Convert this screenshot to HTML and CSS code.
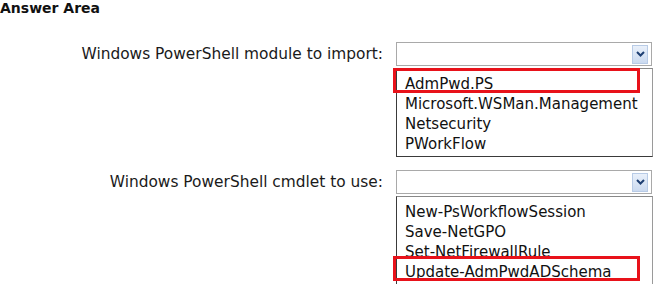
FILE: index.html
```html
<!DOCTYPE html>
<html>
<head>
<meta charset="utf-8">
<link rel="stylesheet" href="styles.css">
</head>
<body>
<div class="title">Answer Area</div>
<div class="rows">
  <div class="row">
    <div class="label">Windows PowerShell module to import:</div>
    <div class="control">
      <div class="select">
        <span class="arrow"><svg width="9" height="6" viewBox="0 0 9 6"><path d="M1 1 L4.5 4.5 L8 1" fill="none" stroke="#1e3f73" stroke-width="2"/></svg></span>
      </div>
      <ul class="list">
        <li class="item picked">AdmPwd.PS</li>
        <li class="item">Microsoft.WSMan.Management</li>
        <li class="item">Netsecurity</li>
        <li class="item">PWorkFlow</li>
      </ul>
    </div>
  </div>
  <div class="row">
    <div class="label">Windows PowerShell cmdlet to use:</div>
    <div class="control">
      <div class="select">
        <span class="arrow"><svg width="9" height="6" viewBox="0 0 9 6"><path d="M1 1 L4.5 4.5 L8 1" fill="none" stroke="#1e3f73" stroke-width="2"/></svg></span>
      </div>
      <ul class="list">
        <li class="item">New-PsWorkflowSession</li>
        <li class="item">Save-NetGPO</li>
        <li class="item">Set-NetFirewallRule</li>
        <li class="item picked">Update-AdmPwdADSchema</li>
      </ul>
    </div>
  </div>
</div>
</body>
</html>
```
FILE: styles.css
```css
html, body {
  margin: 0;
  padding: 0;
  background: #ffffff;
}
body {
  font-family: "DejaVu Sans", Verdana, sans-serif;
  color: #111111;
  width: 655px;
  height: 284px;
  overflow: hidden;
}
.title {
  font-weight: bold;
  font-size: 14px;
  line-height: 16px;
  height: 16px;
}
.rows {
  display: flex;
  flex-direction: column;
  gap: 13px;
  padding-top: 26px;
}
.row {
  display: flex;
  align-items: flex-start;
}
.label {
  width: 383px;
  text-align: right;
  font-size: 15.4px;
  line-height: 24px;
  color: #1a1a1a;
  white-space: nowrap;
}
.control {
  margin-left: 13px;
  width: 256px;
  display: flex;
  flex-direction: column;
  gap: 2px;
}
.select {
  height: 22px;
  border: 1px solid #a9a9a9;
  display: flex;
  justify-content: flex-end;
  align-items: center;
  padding-right: 3px;
}
.arrow {
  width: 14px;
  height: 17px;
  border: 1px solid #b8cbe6;
  background: linear-gradient(#e9f0fa, #cbdaf0);
  display: flex;
  align-items: center;
  justify-content: center;
}
.list {
  list-style: none;
  margin: 0;
  padding: 5px 0 2px 8px;
  width: 247px;
  border: 1px solid #3a3a3a;
  border-top-color: #888888;
  border-right-color: #9a9a9a;
}
.item {
  font-size: 15px;
  line-height: 20px;
  position: relative;
  white-space: nowrap;
}
.picked::after {
  content: "";
  position: absolute;
  left: -12px;
  right: 12px;
  top: -6px;
  bottom: 1px;
  border: 3px solid #e8121a;
}
```
